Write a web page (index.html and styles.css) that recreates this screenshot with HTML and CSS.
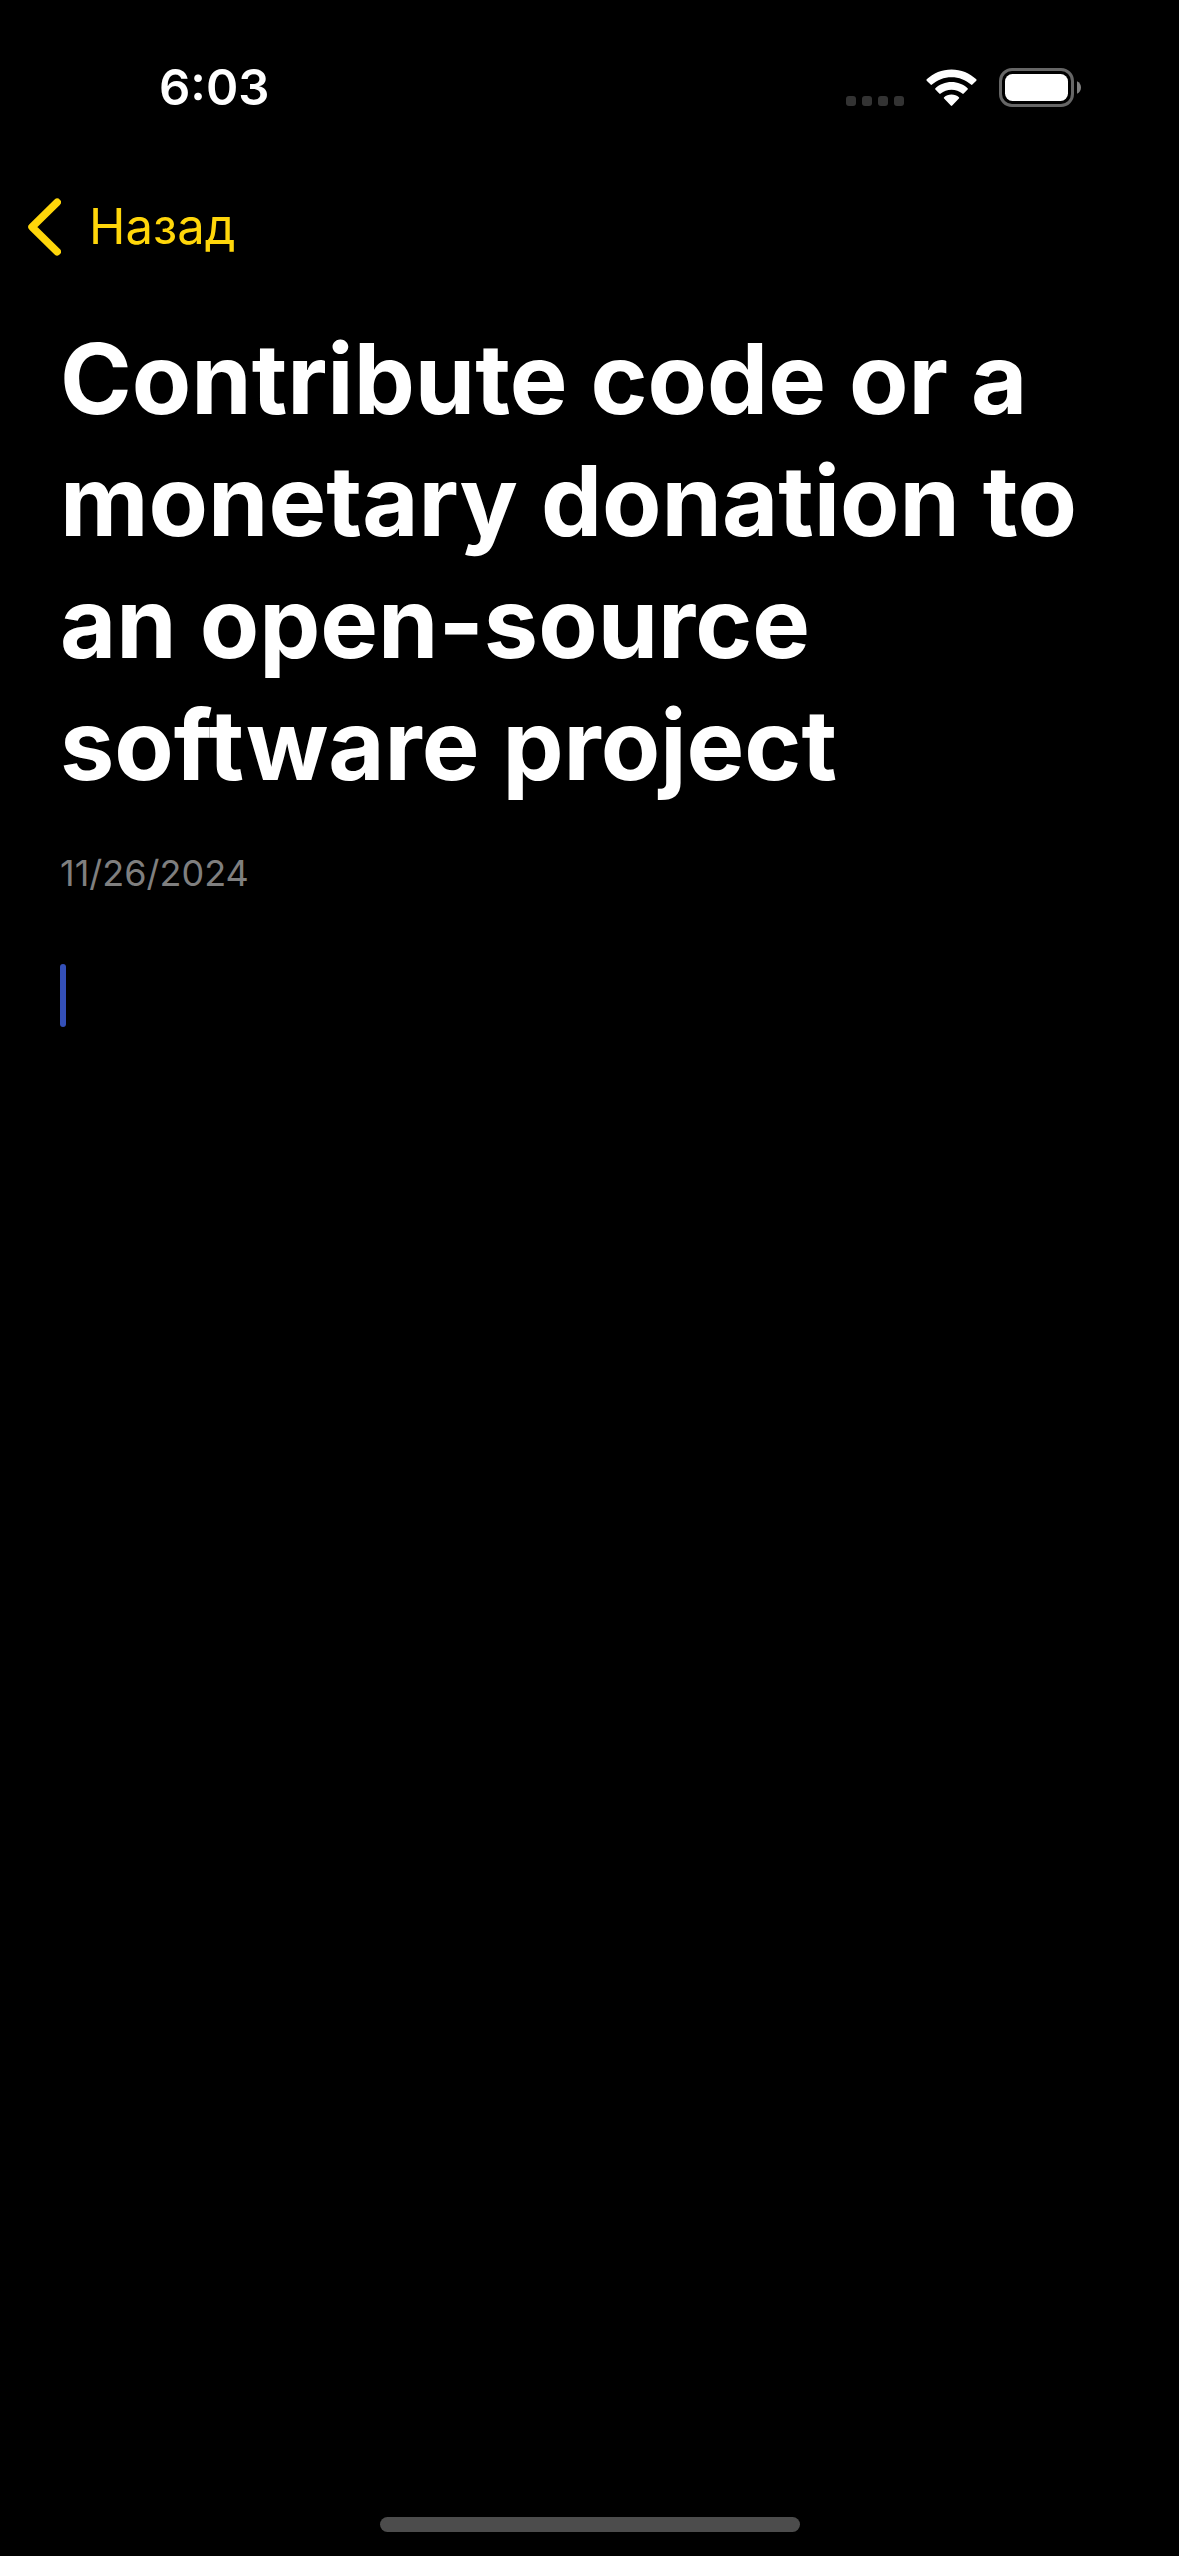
FILE: index.html
```html
<!DOCTYPE html>
<html lang="ru">
<head>
<meta charset="utf-8">
<meta name="viewport" content="width=device-width, initial-scale=1">
<title>Note</title>
<link rel="stylesheet" href="styles.css">
</head>
<body>
<div class="screen">
  <header class="status">
    <time class="clock">6:03</time>
    <div class="indicators">
      <svg class="signal" width="58" height="10" viewBox="0 0 58 10" aria-hidden="true">
        <rect width="10" height="10" rx="3"/>
        <rect x="16" width="10" height="10" rx="3"/>
        <rect x="32" width="10" height="10" rx="3"/>
        <rect x="48" width="10" height="10" rx="3"/>
      </svg>
      <svg class="wifi" width="51" height="38" viewBox="0 0 51 38" aria-hidden="true">
        <path d="M25.5 0.5C35 0.5 43.8 4.200 50.300 10.300Q50.900 11 50.300 11.700L46.400 15.600Q45.700 16.200 45 15.600C39.700 10.800 33 8.200 25.500 8.200S11.300 10.800 6 15.600Q5.300 16.200 4.600 15.600L0.700 11.700Q0.100 11 0.700 10.300C7.200 4.200 16 0.500 25.500 0.500Z"/>
        <path d="M25.500 13C31.700 13 37.300 15.300 41.600 19.200Q42.300 19.900 41.600 20.600L37.700 24.600Q37 25.200 36.300 24.600C33.400 22.100 29.600 20.700 25.500 20.700S17.600 22.100 14.700 24.600Q14 25.200 13.300 24.600L9.400 20.600Q8.700 19.900 9.400 19.200C13.700 15.300 19.300 13 25.500 13Z"/>
        <path d="M25.500 25.500C28.400 25.500 31 26.500 32.900 28.200Q33.600 28.900 32.900 29.600L26.200 36.600Q25.500 37.300 24.800 36.600L18.100 29.600Q17.400 28.900 18.100 28.200C20 26.500 22.600 25.500 25.500 25.500Z"/>
      </svg>
      <svg class="battery" width="82" height="39" viewBox="0 0 82 39" aria-hidden="true">
        <rect x="1.500" y="1.500" width="72" height="36" rx="11.500" fill="none" stroke="#666" stroke-width="3"/>
        <rect x="6" y="6" width="63" height="27" rx="7.500" fill="#fff"/>
        <path d="M78 13.200C80.500 14.300 82 16.700 82 19.500S80.500 24.700 78 25.800Z" fill="#808080"/>
      </svg>
    </div>
  </header>
  <nav class="nav">
    <button class="back" type="button">
      <svg width="33" height="58" viewBox="0 0 33 58" aria-hidden="true">
        <path d="M29.200 4.300L4 29L29.200 53.700" fill="none" stroke="currentColor" stroke-width="7.500" stroke-linecap="round" stroke-linejoin="round"/>
      </svg>
      <span>Назад</span>
    </button>
  </nav>
  <main class="note">
    <h1 class="title">Contribute code or a monetary donation to an open-source software project</h1>
    <time class="date" datetime="2024-11-26">11/26/2024</time>
    <div class="editor">
      <textarea class="text" aria-label="Note"></textarea>
      <span class="caret"></span>
    </div>
  </main>
  <footer class="home"><div class="home-bar"></div></footer>
</div>
</body>
</html>
```

FILE: styles.css
```css
* {
  box-sizing: border-box;
}

body {
  margin: 0;
  background: #000;
  color: #fff;
  font-family: Inter, "Noto Sans", sans-serif;
}

.screen {
  display: flex;
  flex-direction: column;
  min-height: 100vh;
}

.status {
  display: flex;
  justify-content: space-between;
  align-items: center;
  height: 175px;
  padding: 0 98px 0 159px;
}

.clock {
  font-size: 49px;
  line-height: 61px;
  font-weight: 600;
}

.indicators {
  display: flex;
  align-items: center;
  gap: 22px;
}

.signal {
  align-self: flex-end;
  margin-bottom: 1px;
  fill: #333;
}

.wifi {
  fill: #fff;
}

.nav {
  display: flex;
  align-items: center;
  height: 104px;
  padding: 0 28px;
}

.back {
  display: flex;
  align-items: center;
  gap: 28px;
  padding: 0;
  border: 0;
  background: none;
  color: #ffd60a;
  font: inherit;
  font-size: 49px;
  line-height: 60px;
}

.note {
  flex: 1;
  display: flex;
  flex-direction: column;
  padding: 39px 60px 0;
}

.title {
  margin: 0;
  font-size: 97px;
  line-height: 122px;
  font-weight: 700;
}

.date {
  margin-top: 45px;
  color: #7f7f7f;
  font-size: 36px;
  line-height: 44px;
}

.editor {
  position: relative;
  flex: 1;
  display: flex;
  margin-top: 69px;
}

.text {
  flex: 1;
  padding: 0;
  border: 0;
  outline: 0;
  background: none;
  color: inherit;
  font: inherit;
  font-size: 49px;
  line-height: 64px;
  resize: none;
}

.caret {
  position: absolute;
  top: 0;
  left: 0;
  width: 6px;
  height: 63px;
  border-radius: 3px;
  background: #3450b8;
}

.home {
  display: flex;
  justify-content: center;
  padding: 15px 0 24px;
}

.home-bar {
  width: 420px;
  height: 15px;
  border-radius: 8px;
  background: #4c4c4c;
}
```
